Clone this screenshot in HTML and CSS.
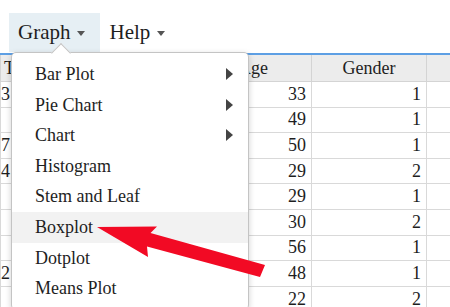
FILE: index.html
```html
<!DOCTYPE html>
<html lang="en">
<head>
    <meta charset="UTF-8">
    <meta name="viewport" content="width=device-width, initial-scale=1.0">
    <title>Data - Graph menu</title>
    <link rel="stylesheet" href="styles.css">
</head>
<body>
    <nav class="menubar">
        <div class="menu-tab active">Graph <span class="caret"></span></div>
        <div class="menu-tab">Help <span class="caret"></span></div>
    </nav>

    <div class="sheet">
        <table class="grid">
            <colgroup>
                <col class="c-first">
                <col class="c-second">
                <col class="c-age">
                <col class="c-gender">
                <col class="c-rest">
            </colgroup>
            <thead>
                <tr>
                    <th class="first">Trt</th>
                    <th>Group</th>
                    <th>Age</th>
                    <th>Gender</th>
                    <th></th>
                </tr>
            </thead>
            <tbody id="rows"></tbody>
        </table>
    </div>

    <div class="dropdown">
        <span class="notch"></span>
        <ul>
            <li class="has-sub">Bar Plot</li>
            <li class="has-sub">Pie Chart</li>
            <li class="has-sub">Chart</li>
            <li>Histogram</li>
            <li>Stem and Leaf</li>
            <li class="hover">Boxplot</li>
            <li>Dotplot</li>
            <li>Means Plot</li>
        </ul>
    </div>

    <svg class="pointer" width="450" height="307" viewBox="0 0 450 307">
        <polygon points="97,227 157,226.5 150.5,233 265,265 260,277 147,246.5 148,257" fill="#f20a24"/>
    </svg>

    <script>
        // first column, age, gender
        const data = [
            ['3', 33, 1], ['', 49, 1], ['7', 50, 1], ['4', 29, 2], ['', 29, 1],
            ['', 30, 2], ['', 56, 1], ['2', 48, 1], ['', 22, 2]
        ];
        const tbody = document.getElementById('rows');
        data.forEach(row => {
            const tr = document.createElement('tr');
            tr.innerHTML = `<td class="first">${row[0]}</td><td></td><td class="num">${row[1]}</td><td class="num">${row[2]}</td><td></td>`;
            tbody.appendChild(tr);
        });
    </script>
</body>
</html>
```

FILE: styles.css
```css
body {
    margin: 0;
    font-family: "Liberation Serif", "Times New Roman", serif;
    font-size: 18px;
    color: #1e1e1e;
    background: #fff;
    width: 450px;
    height: 307px;
    overflow: hidden;
    position: relative;
}
.menubar {
    display: flex;
    padding: 13px 0 0 9px;
    box-sizing: border-box;
    height: 53px;
}
.menu-tab {
    display: flex;
    align-items: center;
    height: 39px;
    padding: 0 15px 0 9px;
    font-size: 21px;
}
.menu-tab.active {
    background-color: #e6eff4;
}
.caret {
    width: 0;
    height: 0;
    margin-left: 7px;
    margin-top: 2px;
    border-left: 4px solid transparent;
    border-right: 4px solid transparent;
    border-top: 5px solid #555;
}
.sheet {
    border-top: 2px solid #5d9fe4;
}
.grid {
    border-collapse: collapse;
    table-layout: fixed;
    width: 450px;
}
.c-first { width: 120px; }
.c-second { width: 74px; }
.c-age { width: 117px; }
.c-gender { width: 115px; }
.c-rest { width: 24px; }
.grid th {
    background-color: #ececec;
    font-weight: normal;
    height: 26px;
    padding: 0;
    border: 1px solid #d4d4d4;
    border-top: none;
    text-align: center;
}
.grid th.first {
    text-align: left;
    padding-left: 3px;
}
.grid td {
    height: 24.6px;
    padding: 0 5px;
    border: 1px solid #d9d9d9;
    white-space: nowrap;
    overflow: hidden;
}
.grid td.first {
    padding-left: 0;
}
.grid td.num {
    text-align: right;
}
.dropdown {
    position: absolute;
    left: 11px;
    top: 52px;
    width: 238px;
    height: 258px;
    background: #fff;
    border: 1px solid #c4c4c4;
    border-radius: 5px;
    box-shadow: 0 2px 6px rgba(0,0,0,0.18);
    box-sizing: border-box;
}
.notch {
    position: absolute;
    left: 42px;
    top: -7px;
    width: 13px;
    height: 13px;
    background: #fff;
    border-left: 1px solid #c4c4c4;
    border-top: 1px solid #c4c4c4;
    transform: rotate(45deg);
}
.dropdown ul {
    list-style: none;
    margin: 0;
    padding: 6px 0 0 0;
    position: relative;
}
.dropdown li {
    height: 30.6px;
    line-height: 30.6px;
    padding-left: 23px;
    position: relative;
}
.dropdown li.hover {
    background-color: #f2f2f2;
}
.dropdown li.has-sub::after {
    content: "";
    position: absolute;
    right: 15px;
    top: 9px;
    border-top: 6px solid transparent;
    border-bottom: 6px solid transparent;
    border-left: 7px solid #444;
}
.pointer {
    position: absolute;
    top: 0;
    left: 0;
    pointer-events: none;
}
```
